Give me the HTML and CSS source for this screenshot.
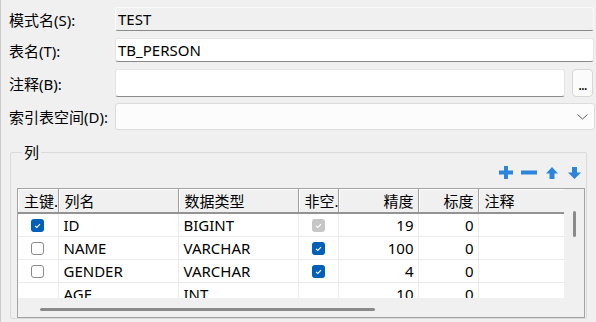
FILE: index.html
```html
<!DOCTYPE html>
<html>
	<head>
		<meta http-equiv="Content-Type" content="text/html; charset=utf-8" />
		<title>表属性</title>
		<link rel="stylesheet" href="styles.css">
	</head>
	<body>
		<div class="dialog">
			<div class="form">
				<div class="field">
					<span class="lbl">模式名(S):</span>
					<div class="edit ro">TEST</div>
				</div>
				<div class="field">
					<span class="lbl">表名(T):</span>
					<div class="edit">TB_PERSON</div>
				</div>
				<div class="field note">
					<span class="lbl">注释(B):</span>
					<div class="edit tall"></div>
					<div class="btn">...</div>
				</div>
				<div class="field last">
					<span class="lbl">索引表空间(D):</span>
					<div class="combo">
						<svg width="11" height="6" viewBox="0 0 11 6"><polyline points="0.5,0.5 5.5,5 10.5,0.5" fill="none" stroke="#5c5c5c" stroke-width="1"/></svg>
					</div>
				</div>
			</div>

			<fieldset class="group">
				<legend>列</legend>
				<div class="tools">
					<svg class="t-add" width="14" height="13" viewBox="0 0 14 13"><rect x="0" y="4.5" width="14" height="4" fill="#2b85dc"/><rect x="5" y="0" width="4" height="13" fill="#2b85dc"/></svg>
					<svg class="t-del" width="16" height="13" viewBox="0 0 16 13"><rect x="0" y="4.5" width="16" height="4" fill="#2b85dc"/></svg>
					<svg class="t-up" width="12" height="12" viewBox="0 0 12 12"><polygon points="6,0 12,6.5 8.5,6.5 8.5,12 3.5,12 3.5,6.5 0,6.5" fill="#2b85dc"/></svg>
					<svg class="t-down" width="13" height="12" viewBox="0 0 13 12"><polygon points="4,0 9,0 9,5.5 13,5.5 6.5,12 0,5.5 4,5.5" fill="#2b85dc"/></svg>
				</div>
				<div class="grid">
					<div class="view">
						<table class="cols">
							<colgroup>
								<col class="w-pk"><col class="w-name"><col class="w-type"><col class="w-nn"><col class="w-prec"><col class="w-scale"><col class="w-note">
							</colgroup>
							<thead>
								<tr><th>主键.</th><th>列名</th><th>数据类型</th><th>非空.</th><th class="r">精度</th><th class="r">标度</th><th>注释</th></tr>
							</thead>
							<tbody>
								<tr>
									<td class="c"><svg class="chk" width="13" height="13" viewBox="0 0 13 13"><rect x="0" y="0" width="13" height="13" rx="3" fill="#005fb8"/><polyline points="4,6.8 5.8,8.4 9,5.2" fill="none" stroke="#fff" stroke-width="1.1"/></svg></td>
									<td>ID</td><td>BIGINT</td>
									<td class="c"><svg class="chk" width="13" height="13" viewBox="0 0 13 13"><rect x="0" y="0" width="13" height="13" rx="3" fill="#c6c6c6"/><polyline points="4,6.8 5.8,8.4 9,5.2" fill="none" stroke="#fff" stroke-width="1.1"/></svg></td>
									<td class="r">19</td><td class="r">0</td><td></td>
								</tr>
								<tr>
									<td class="c"><svg class="chk" width="13" height="13" viewBox="0 0 13 13"><rect x="0.5" y="0.5" width="12" height="12" rx="2.5" fill="#fff" stroke="#8a8a8a"/></svg></td>
									<td>NAME</td><td>VARCHAR</td>
									<td class="c"><svg class="chk" width="13" height="13" viewBox="0 0 13 13"><rect x="0" y="0" width="13" height="13" rx="3" fill="#005fb8"/><polyline points="4,6.8 5.8,8.4 9,5.2" fill="none" stroke="#fff" stroke-width="1.1"/></svg></td>
									<td class="r">100</td><td class="r">0</td><td></td>
								</tr>
								<tr>
									<td class="c"><svg class="chk" width="13" height="13" viewBox="0 0 13 13"><rect x="0.5" y="0.5" width="12" height="12" rx="2.5" fill="#fff" stroke="#8a8a8a"/></svg></td>
									<td>GENDER</td><td>VARCHAR</td>
									<td class="c"><svg class="chk" width="13" height="13" viewBox="0 0 13 13"><rect x="0" y="0" width="13" height="13" rx="3" fill="#005fb8"/><polyline points="4,6.8 5.8,8.4 9,5.2" fill="none" stroke="#fff" stroke-width="1.1"/></svg></td>
									<td class="r">4</td><td class="r">0</td><td></td>
								</tr>
								<tr>
									<td class="c"></td>
									<td>AGE</td><td>INT</td>
									<td class="c"></td>
									<td class="r">10</td><td class="r">0</td><td></td>
								</tr>
							</tbody>
						</table>
					</div>
					<div class="vbar"><span class="vthumb"></span></div>
					<div class="hbar"><span class="hthumb"></span></div>
					<div class="corner"></div>
				</div>
			</fieldset>
		</div>
	</body>
</html>
```

FILE: styles.css
```css
body {margin:0;background:#f0f0f0;color:#000;font:15px "Noto Sans", "Noto Sans CJK SC", sans-serif;}
.dialog {height:322px;box-sizing:border-box;border-left:1px solid #cbcbcb;overflow:hidden;}

/* top form */
.form {padding:7px 2px 0 8px;}
.field {display:flex;align-items:center;margin-bottom:7px;}
.field.note {margin-bottom:6px;}
.field.last {margin-bottom:0;}
.lbl {width:106px;flex:none;white-space:nowrap;}
.edit {flex:1;height:24px;box-sizing:border-box;border:1px solid #e5e5e5;border-bottom-color:#8a8a8a;border-radius:3px;background:#fff;padding:0 2px;line-height:22px;}
.edit.ro {background:#f0f0f0;border-color:#fafafa;border-bottom-color:#8a8a8a;}
.edit.tall {height:28px;}
.btn {width:21px;height:28px;box-sizing:border-box;margin:0 1px 0 7px;border:1px solid #d6d6d6;border-radius:4px;background:#fbfbfb;text-align:center;line-height:30px;font-size:14px;letter-spacing:-1px;}
.combo {flex:1;height:27px;box-sizing:border-box;margin-right:-1px;border:1px solid #dcdcdc;border-radius:3px;background:#fcfcfc;display:flex;align-items:center;justify-content:flex-end;padding-right:6px;}

/* columns group */
.group {margin:12px 9px 0 9px;padding:0 1px 0 6px;border:1px solid #dadada;border-radius:2px;}
.group legend {margin-left:5px;padding:0 2px;line-height:20px;}
.tools {height:26px;display:flex;justify-content:flex-end;align-items:flex-start;padding-right:4px;box-sizing:border-box;}
.tools svg {display:block;}
.t-add {margin-top:4px;}
.t-del {margin:4px 0 0 8px;}
.t-up {margin:5px 0 0 9px;}
.t-down {margin:5px 0 0 10px;}

.grid {display:grid;grid-template-columns:546px 20px;grid-template-rows:109px 19px;border:1px solid #a3a3a3;background:#f0f0f0;}
.view {overflow:hidden;background:#fff;}
.vbar {background:#f0f0f0;padding:22px 0 0 9px;}
.vthumb {display:block;width:3px;height:26px;border-radius:2px;background:#8a8a8a;}
.hbar {background:#f0f0f0;padding:10px 0 0 22px;}
.hthumb {display:block;width:335px;height:3px;border-radius:2px;background:#8a8a8a;}
.corner {background:#f0f0f0;}

.cols {border-collapse:collapse;table-layout:fixed;width:546px;}
.w-pk {width:40px;}
.w-name {width:120px;}
.w-type {width:120px;}
.w-nn {width:40px;}
.w-prec {width:80px;}
.w-scale {width:60px;}
.w-note {width:86px;}
.cols th {height:23px;padding:0 4px 0 6px;font-weight:normal;text-align:left;white-space:nowrap;overflow:hidden;background:#f0f0f0;border-right:1px solid #a0a0a0;border-bottom:2px solid #939393;box-shadow:inset 1px 1px 0 #fff;}
.cols th:last-child {border-right:none;}
.cols td {height:22px;padding:0 4px 0 5px;white-space:nowrap;overflow:hidden;border-right:1px solid #ebebeb;border-bottom:1px solid #ebebeb;}
.cols .r {text-align:right;}
.cols .c {text-align:center;padding:0;}
.chk {display:block;margin:0 auto;}
```
